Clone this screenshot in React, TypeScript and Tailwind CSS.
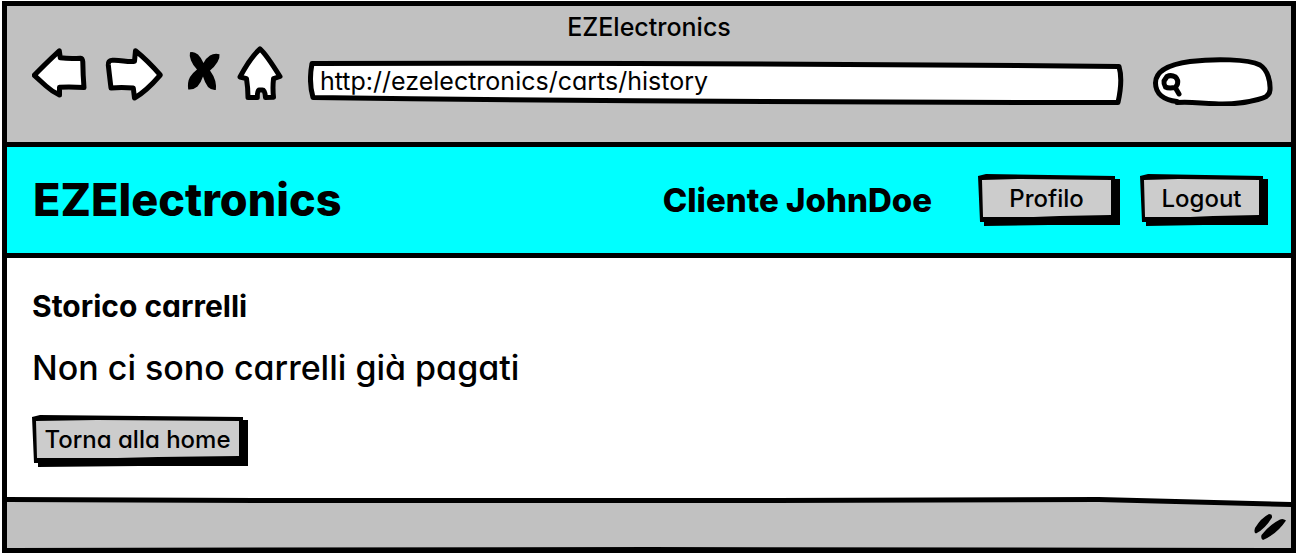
import type { ReactNode } from "react";

const stroke = {
  fill: "#fff",
  stroke: "#000",
  strokeWidth: 5,
  strokeLinejoin: "round" as const,
  strokeLinecap: "round" as const,
};

function SketchButton({ children, className }: { children: ReactNode; className: string }) {
  return (
    <button
      type="button"
      className={`flex h-[52px] cursor-pointer bg-black pt-[5px] pr-[9px] pb-[9px] pl-[4px] text-[24px] leading-none font-medium [clip-path:polygon(0_2px,8px_0,calc(100%_-_5px)_2px,calc(100%_-_5px)_5px,100%_5px,100%_calc(100%_-_1px),50%_calc(100%_-_1px),6px_100%,6px_calc(100%_-_4px),2px_calc(100%_-_4px))] ${className}`}
    >
      <span className="flex h-full w-full items-center justify-center whitespace-nowrap bg-[#cccccc] pt-[2px] [clip-path:polygon(0_1px,30%_0,100%_1px,100%_calc(100%_-_2px),60%_calc(100%_-_1px),40%_100%,1px_100%)]">
        {children}
      </span>
    </button>
  );
}

function BrowserBar() {
  return (
    <div className="bg-[#c1c1c1] pt-[5px] pb-9">
      <div className="text-center text-[25px] leading-8 font-medium">EZElectronics</div>
      <div className="mt-[3px] flex items-center gap-4 pr-[17px] pl-[25px]">
        <button type="button" aria-label="Back" className="shrink-0">
          <svg width="56" height="60" viewBox="32 46 56 60" className="block">
            <path {...stroke} d="M34.3 75.3 Q43 66 59.300 50.800 L60.300 57.800 Q70 59 80.500 58.200 Q82.600 58.500 82.800 62 Q83 76 84 87.600 Q70 86.500 59.500 87.300 L59.500 95 Q52 91.500 46 86 Z" />
          </svg>
        </button>
        <button type="button" aria-label="Forward" className="shrink-0">
          <svg width="60" height="60" viewBox="104 46 60 60" className="block">
            <path {...stroke} d="M108.300 65 Q108 60.500 112 60.300 C120 59.500 128 62.500 134.500 61.300 L135.500 50.800 Q147 60 160.300 75 Q146 91.500 134.500 98 L133.300 88 Q121 87 111 88 Q110 80 108.300 65 Z" />
          </svg>
        </button>
        <button type="button" aria-label="Stop" className="shrink-0">
          <svg width="40" height="60" viewBox="180 46 40 60" className="block">
            <path d="M190 52.200 Q194 51 198 54.500 Q201.500 58 203.500 63 Q206 58 210 55.500 Q214 53 219.500 54.200 Q220 58 217.500 62 Q214.500 67 210 70.500 Q214 76 215.300 81 Q216.500 86 215.800 90 Q211.500 90.500 208 87 Q204.500 82 203 76.500 Q201 82.500 197.500 86.500 Q193.500 90 188.200 89.500 Q187.200 82 190 77 Q193 72.500 197 69.500 Q193 65.500 191 60.500 Q189 56 190 52.200 Z" />
          </svg>
        </button>
        <button type="button" aria-label="Home" className="shrink-0">
          <svg width="48" height="60" viewBox="236 46 48 60" className="block">
            <path {...stroke} d="M260 48.800 Q266 54 280 76.500 L273.500 78.700 Q272.500 88 273.500 97.300 L265.500 97.500 Q265 90 262.500 90 L259 90 Q257.300 91 257.300 97.500 L248 97.500 Q248 88 246.500 78.700 L240 77 Q250 58 260 48.800 Z" />
          </svg>
        </button>
        <div className="relative ml-2 h-[60px] min-w-0 flex-1">
          <svg viewBox="308 46 816 60" preserveAspectRatio="none" aria-hidden="true" className="absolute inset-0 h-full w-full">
            <path {...stroke} vectorEffect="non-scaling-stroke" d="M312 63.500 Q700 62.500 1119 66.500 Q1123 80 1118 102.500 Q700 102.500 313 97.500 Q308.500 82 312 63.500 Z" />
          </svg>
          <input
            type="text"
            aria-label="Address"
            defaultValue="http://ezelectronics/carts/history"
            className="relative h-full w-full bg-transparent pt-[10px] pr-4 pb-0 pl-3 text-[25px] outline-none"
          />
        </div>
        <div className="relative ml-3 h-[60px] w-[122px] shrink-0">
          <svg viewBox="1152 46 122 60" aria-hidden="true" className="absolute inset-0 h-full w-full">
            <path {...stroke} d="M1177 101.500 C1164 100 1155.500 94 1155.500 83 C1155.500 70 1172 64 1190 61.500 C1215 58.500 1248 59 1260 65 C1268 70 1270.500 82 1270 90 C1269.500 96.500 1264 98 1258 99.500 C1245 103 1230 104.500 1215 103.800 C1198 103 1190 101.500 1177 102.500 Z" />
            <path {...stroke} d="M1167 76.500 Q1171 74.500 1175.500 77 Q1178.500 80 1177.500 84 L1175.500 87.500 Q1168 88.500 1165.500 87 Q1163.500 84 1164 81 Z M1175.500 88 L1179 94" />
          </svg>
          <input type="search" aria-label="Search" className="relative h-full w-full bg-transparent pr-3 pl-8 text-[20px] outline-none" />
        </div>
      </div>
    </div>
  );
}

export default function App() {
  return (
    <div className="bg-white px-[2px] pt-px pb-[2px] font-['Inter','Noto_Sans',sans-serif] text-black [font-feature-settings:'cv11']">
      <div className="border-[5px] border-black">
        <BrowserBar />

        <header className="flex h-[116px] items-center border-y-[5px] border-black bg-[#00ffff] pr-[23px] pl-[26px]">
          <h1 className="pb-[2px] text-[45px] leading-none font-extrabold">EZElectronics</h1>
          <div className="ml-auto flex items-center">
            <span className="mr-[46px] text-[33px] leading-none font-extrabold whitespace-nowrap">Cliente JohnDoe</span>
            <div className="flex gap-5">
              <SketchButton className="w-[142px]">Profilo</SketchButton>
              <SketchButton className="w-[128px]">Logout</SketchButton>
            </div>
          </div>
        </header>

        <main className="px-[25px] pt-7 pb-[30px]">
          <h2 className="text-[30px] leading-10 font-bold">Storico carrelli</h2>
          <p className="mt-5 text-[34px] leading-[44px] font-medium">Non ci sono carrelli già pagati</p>
          <SketchButton className="mt-[25px] w-[216px]">Torna alla home</SketchButton>
        </main>

        <footer className="bg-black [clip-path:polygon(0_0,20%_1px,60%_1px,85%_0,100%_5px,100%_100%,0_100%)]">
          <div className="flex h-[51px] items-center justify-end bg-[#c1c1c1] pt-2 pr-1 [clip-path:polygon(0_5px,20%_6px,60%_6px,85%_5px,100%_10px,100%_100%,50%_calc(100%_-_1px),0_100%)]">
            <svg width="34" height="28" viewBox="1254 515 34 28" aria-hidden="true">
              <path d="M1270 516 Q1273.500 516 1273 519.500 Q1266 531 1257 535.500 Q1254.500 535 1256 530 Q1262 520 1270 516 Z M1281 521.500 Q1284 520 1287 522.500 Q1278 536 1264 542 Q1261.500 541 1262.500 537 Q1270 527 1281 521.500 Z" />
            </svg>
          </div>
        </footer>
      </div>
    </div>
  );
}
